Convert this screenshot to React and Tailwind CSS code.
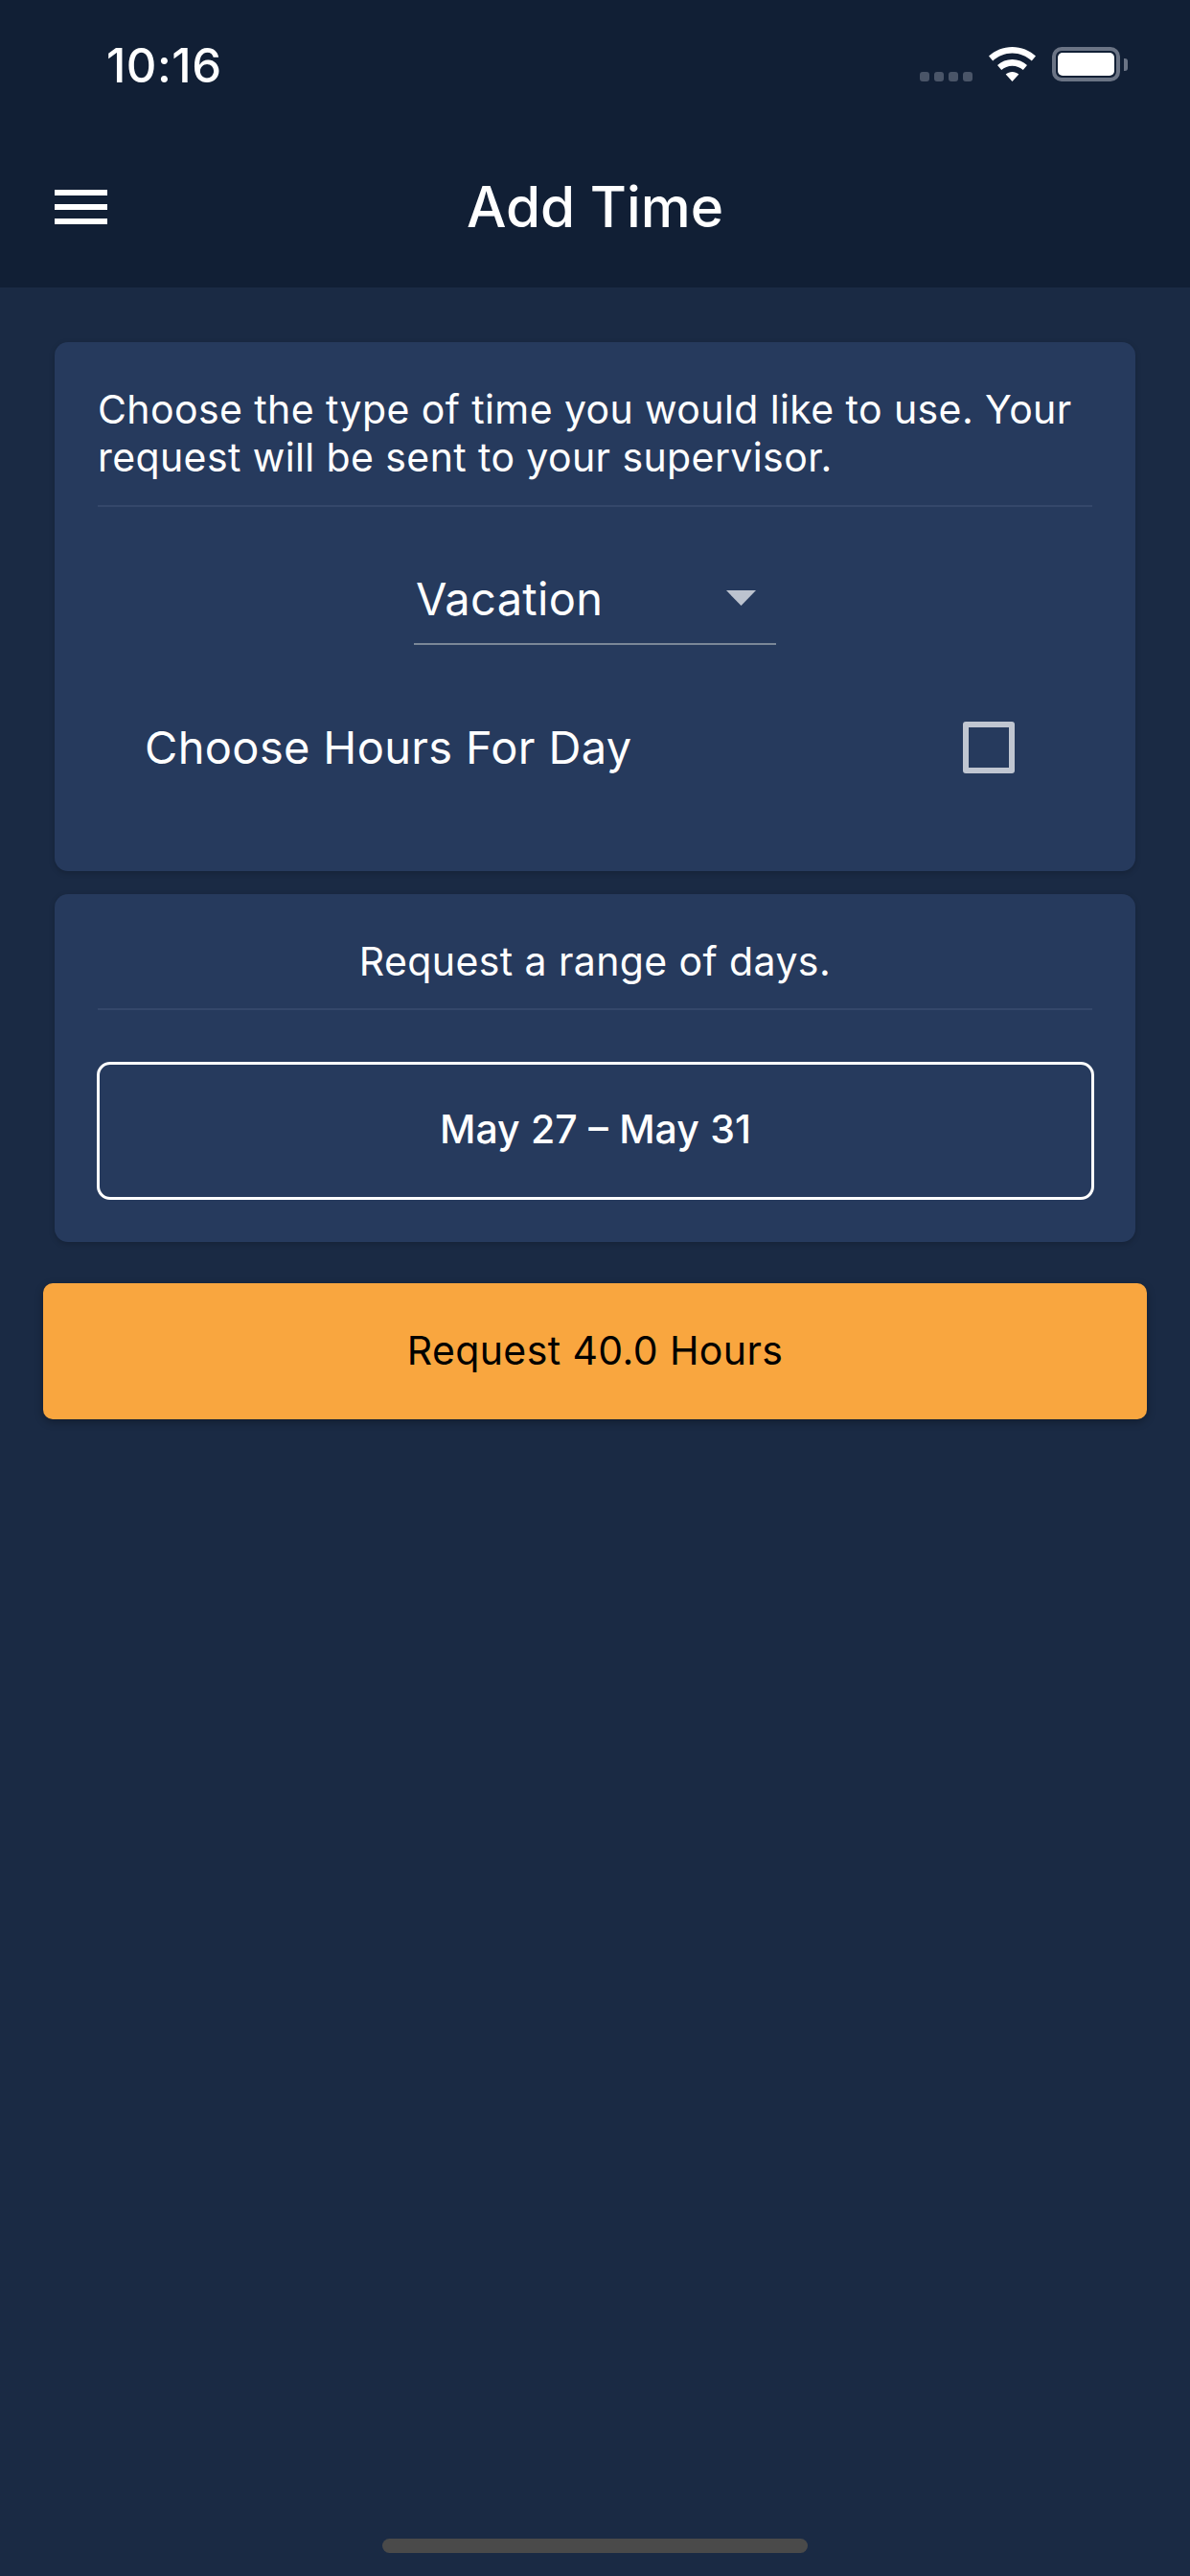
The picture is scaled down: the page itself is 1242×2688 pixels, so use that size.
export default function App() {
  return (
    <div className="flex h-[2688px] w-[1242px] flex-col overflow-hidden bg-[#1a2a44] font-['Inter','Noto_Sans',sans-serif] text-white">
      <header className="h-[300px] shrink-0 bg-[#111f35]">
        <div className="flex h-[132px] items-start justify-between pl-[111px] pr-[65px] pt-[49px]">
          <span className="pt-[2px] text-[49px] font-medium leading-[36px] tracking-[0.5px]">10:16</span>
          <div className="flex items-start">
            <div className="mr-[17px] mt-[26px] flex gap-[5px]">
              <span className="h-[10px] w-[10px] rounded-[3px] bg-[#4a5568]" />
              <span className="h-[10px] w-[10px] rounded-[3px] bg-[#4a5568]" />
              <span className="h-[10px] w-[10px] rounded-[3px] bg-[#4a5568]" />
              <span className="h-[10px] w-[10px] rounded-[3px] bg-[#4a5568]" />
            </div>
            <svg className="mr-[17px]" width="49" height="36" viewBox="0 0 49 36" fill="#fff">
              <path d="M24.5 0C15 0 6.5 3.6 0 9.6L4.2 14.6C9.6 9.6 16.7 6.6 24.5 6.6S39.4 9.6 44.8 14.6L49 9.6C42.5 3.6 34 0 24.5 0Z" />
              <path d="M24.5 13C18.6 13 13.2 15.2 9 19L13.2 24C16.2 21.3 20.1 19.7 24.5 19.7S32.8 21.3 35.8 24L40 19C35.8 15.2 30.4 13 24.5 13Z" />
              <path d="M24.5 26C22 26 19.6 26.9 17.7 28.5L24.5 36L31.3 28.5C29.4 26.9 27 26 24.5 26Z" />
            </svg>
            <div className="flex items-center">
              <div className="h-[36px] w-[71px] rounded-[10px] border-[4px] border-[#6b7485] p-[2px]">
                <div className="h-full w-full rounded-[5px] bg-white" />
              </div>
              <div className="ml-[4px] h-[13px] w-[4px] rounded-r-[3px] bg-[#6b7485]" />
            </div>
          </div>
        </div>
        <div className="relative flex h-[168px] items-center justify-center">
          <div className="absolute left-[57px] top-[66px] flex w-[55px] flex-col gap-[9px]">
            <span className="h-[6px] bg-white" />
            <span className="h-[6px] bg-white" />
            <span className="h-[6px] bg-white" />
          </div>
          <h1 className="text-[58.5px] font-medium leading-none">Add Time</h1>
        </div>
      </header>

      <main className="flex flex-col px-[57px] pt-[57px]">
        <section className="h-[552px] rounded-[14px] bg-[#263a5d] px-[45px] pt-[45px] shadow-[0_2px_6px_rgba(0,0,0,0.2)]">
          <p className="text-[41px] leading-[50px] tracking-[0.4px]">
            Choose the type of time you would like to use. Your request will be sent to your supervisor.
          </p>
          <div className="mt-[25px] h-[2px] bg-[#34476a]" />
          <div className="mx-auto mt-[48px] flex h-[96px] w-[378px] items-center justify-between border-b-2 border-[#7b8798] pl-[2px] pr-[21px]">
            <span className="text-[47px] leading-none tracking-[0.3px]">Vacation</span>
            <svg width="31" height="16" viewBox="0 0 31 16" fill="#bcc3cf"><path d="M0 0H31L15.5 16Z" /></svg>
          </div>
          <div className="mt-[78px] flex items-center justify-between pl-[49px] pr-[81px]">
            <span className="text-[47px] leading-[58px] tracking-[0.35px]">Choose Hours For Day</span>
            <span className="h-[54px] w-[54px] rounded-[3px] border-[6px] border-[#c0c6d1]" />
          </div>
        </section>

        <section className="mt-[24px] h-[363px] rounded-[14px] bg-[#263a5d] px-[45px] pt-[45px] shadow-[0_2px_6px_rgba(0,0,0,0.2)]">
          <p className="text-center text-[41px] leading-[50px] tracking-[0.4px]">Request a range of days.</p>
          <div className="mt-[24px] h-[2px] bg-[#34476a]" />
          <button className="-mx-[1px] mt-[54px] flex h-[144px] w-[1041px] items-center justify-center rounded-[14px] border-[3px] border-white pb-[3px] text-[41px] font-medium [word-spacing:0.5px]">
            May 27 – May 31
          </button>
        </section>

        <button className="mt-[43px] -mx-[12px] flex h-[142px] items-center justify-center rounded-[10px] bg-[#f9a63f] text-[41px] tracking-[0.4px] text-black shadow-[0_3px_8px_rgba(0,0,0,0.3)]">
          Request 40.0 Hours
        </button>
      </main>

      <div className="mx-auto mb-[24px] mt-auto h-[15px] w-[444px] rounded-full bg-[#4a4a4a]" />
    </div>
  );
}
